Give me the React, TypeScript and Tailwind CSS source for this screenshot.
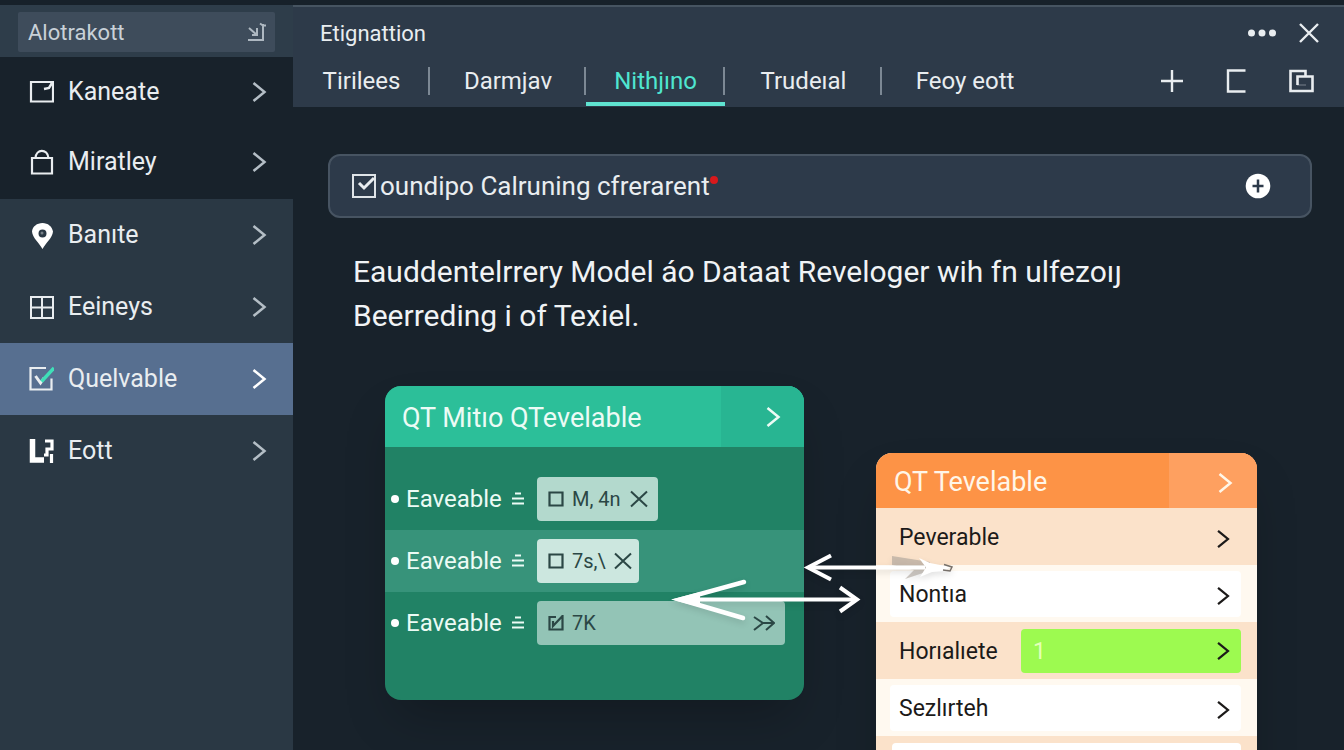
import type { ReactNode } from 'react'

const Chevron = ({ className = '' }: { className?: string }) => (
  <svg viewBox="0 0 16 22" className={`h-[22px] w-4 shrink-0 ${className}`} fill="none" stroke="currentColor" strokeWidth="2.500" aria-hidden="true">
    <path d="M2.500 2 L13.500 11 L2.500 20" />
  </svg>
)

const Icon = ({ children }: { children: ReactNode }) => (
  <svg viewBox="0 0 26 28" className="h-7 w-[26px] shrink-0" fill="none" stroke="currentColor" strokeWidth="2.200" aria-hidden="true">
    {children}
  </svg>
)

const topItems = [
  {
    label: 'Kaneate',
    icon: <Icon><path d="M3 4h22v19.500H3z" /><path d="M16 11l5-1 3-5" strokeWidth="2.500" /></Icon>,
  },
  {
    label: 'Miratley',
    icon: <Icon><path d="M4 10h20v15.500H4z" /><path d="M7.500 10C8 0.500 19.500 0.500 20.500 10" /></Icon>,
  },
]

const bottomItems = [
  {
    label: 'Banıte',
    icon: (
      <Icon>
        <path
          d="M14.500 2C9 2 4.500 5.500 4 10.500C4.500 17 11 21.500 14.500 28C18 21.500 24.500 17 25 10.500C24 5.500 20 2 14.500 2Z M14.500 8.500a4 4 0 1 1 0 8a4 4 0 1 1 0-8Z"
          fill="white"
          fillRule="evenodd"
          stroke="none"
        />
        <circle cx="14" cy="12" r="1.500" fill="currentColor" stroke="none" opacity="0.4" />
      </Icon>
    ),
  },
  {
    label: 'Eeineys',
    icon: <Icon><path d="M3 4h22v21H3zM14 4v21M3 14.500h22" strokeWidth="2" /></Icon>,
  },
  {
    label: 'Quelvable',
    active: true,
    icon: (
      <Icon>
        <path d="M18 3H2.500v21.500h21v-11" />
        <path d="M7.500 11l5 7 3.500-5" strokeWidth="3" />
        <path d="M13.500 16.500L26 3" stroke="#3fe0b8" strokeWidth="3.400" />
      </Icon>
    ),
  },
  {
    label: 'Eott',
    icon: (
      <Icon>
        <path d="M4.500 2v21h11.500" stroke="white" strokeWidth="5.500" />
        <path d="M17 4h7v8h-5v6h-3M23.500 17v9" stroke="white" strokeWidth="3.200" />
      </Icon>
    ),
  },
]

const tabs = [
  { label: 'Tirilees', width: 'w-[137px]' },
  { label: 'Darmjav', width: 'w-[156px]' },
  { label: 'Nithjıno', width: 'w-[139px]', active: true },
  { label: 'Trudeıal', width: 'w-[157px]' },
  { label: 'Feoy eott', width: 'w-[166px]' },
]

const NavItem = ({ label, icon, active, height }: { label: string; icon: ReactNode; active?: boolean; height: string }) => (
  <li>
    <a
      href="#"
      aria-current={active ? 'page' : undefined}
      className={`flex items-center gap-[14px] pr-[26px] pl-7 text-[25px] text-[#e9edf0] ${height} ${active ? 'bg-[#576f90]' : ''}`}
    >
      {icon}
      <span className="flex-1">{label}</span>
      <Chevron className={active ? 'text-white' : 'text-[#b4bec6]'} />
    </a>
  </li>
)

const Sidebar = () => (
  <aside className="flex w-[293px] shrink-0 flex-col bg-[#2a3844]">
    <div className="bg-[#2e3d4a] px-[18px] pt-[7px] pb-[5px]">
      <label className="flex h-10 items-center rounded-xs bg-[#3e4c5b] pr-2 pl-[10px]">
        <input
          aria-label="Alotrakott"
          defaultValue="Alotrakott"
          className="min-w-0 flex-1 bg-transparent text-[22px] text-[#c9d1d8] outline-none"
        />
        <svg viewBox="0 0 20 24" className="h-6 w-5 text-[#aeb8c1]" fill="none" stroke="currentColor" strokeWidth="2" aria-hidden="true">
          <path d="M1 20h15V4M13 3.500l3 2h3M2 8l8 7M10 8v7H5" />
        </svg>
      </label>
    </div>
    <nav>
      <ul className="bg-[#18222b] pb-[2px]">
        {topItems.map((item) => (
          <NavItem key={item.label} {...item} height="h-[70px]" />
        ))}
      </ul>
      <ul>
        {bottomItems.map((item) => (
          <NavItem key={item.label} {...item} height="h-[72px]" />
        ))}
      </ul>
    </nav>
  </aside>
)

const Header = () => (
  <header className="border-t-2 border-[#465461] bg-[#2d3a49] text-[#e9edf0]">
    <div className="flex h-[52px] items-center justify-between pr-6 pl-[27px]">
      <h1 className="text-[22px]">Etignattion</h1>
      <div className="flex items-center gap-5">
        <button aria-label="More">
          <svg viewBox="0 0 30 8" className="h-2 w-[30px]" fill="currentColor" aria-hidden="true">
            <circle cx="3.500" cy="4" r="3.500" />
            <circle cx="14" cy="4" r="3.500" />
            <circle cx="24.500" cy="4" r="3.500" />
          </svg>
        </button>
        <button aria-label="Close">
          <svg viewBox="0 0 22 22" className="size-[22px]" fill="none" stroke="currentColor" strokeWidth="2.400" aria-hidden="true">
            <path d="M2 2l18 18M20 2L2 20" />
          </svg>
        </button>
      </div>
    </div>
    <div className="flex h-12 justify-between pr-[30px]">
      <div role="tablist" className="flex">
        {tabs.map(({ label, width, active }, i) => (
          <button
            key={label}
            role="tab"
            aria-selected={!!active}
            className={`relative flex h-[47px] justify-center pt-1 text-2xl leading-9 whitespace-nowrap ${width} ${
              active ? 'border-b-4 border-[#5fe3d0] text-[#4fe6d0]' : ''
            }`}
          >
            {label}
            {i < tabs.length - 1 && <span className="absolute top-2 right-0 h-7 w-[2px] bg-[#7c8894]" />}
          </button>
        ))}
      </div>
      <div className="flex items-center gap-10 pb-1">
        <button aria-label="Add">
          <svg viewBox="0 0 24 24" className="size-6" fill="none" stroke="currentColor" strokeWidth="2.400" aria-hidden="true">
            <path d="M12 1v22M1 12h22" />
          </svg>
        </button>
        <button aria-label="Panel">
          <svg viewBox="0 0 24 24" className="size-6" fill="none" stroke="currentColor" strokeWidth="2.400" aria-hidden="true">
            <path d="M21.500 1.500H4v21h17.500" />
          </svg>
        </button>
        <button aria-label="Duplicate">
          <svg viewBox="0 0 26 24" className="h-6 w-[26px]" fill="none" stroke="currentColor" strokeWidth="2.600" aria-hidden="true">
            <path d="M17.500 7V2H2.500v20h22V7.500H9.500V16" />
            <path d="M9 16h9" strokeWidth="1" opacity="0.4" />
          </svg>
        </button>
      </div>
    </div>
  </header>
)

const SearchBar = () => (
  <div className="flex h-16 items-center justify-between rounded-xl border-2 border-[#475462] bg-[#2d3a4a] pr-[39px] pl-[22px]">
    <label className="flex items-center gap-1 text-[26px] leading-9 text-[#e9edf0]">
      <span className="relative size-6">
        <input type="checkbox" defaultChecked className="block size-6 appearance-none border-2 border-[#dfe4e8]" />
        <svg viewBox="0 0 24 24" className="pointer-events-none absolute inset-0" fill="none" stroke="currentColor" strokeWidth="3" aria-hidden="true">
          <path d="M7 9l5 5L22 4" />
        </svg>
      </span>
      <span>oundipo Calruning cfrerarent</span>
      <span className="mt-2 -ml-1 size-2 self-start rounded-full bg-[#d8191c]" />
    </label>
    <button aria-label="Add field" className="text-white">
      <svg viewBox="0 0 26 26" className="size-[26px]" aria-hidden="true">
        <circle cx="13" cy="13" r="12.300" fill="currentColor" />
        <path d="M13 6.500v13M7.500 13h11" stroke="#2d3a4a" strokeWidth="2.500" />
      </svg>
    </button>
  </div>
)

const Cross = () => (
  <svg viewBox="0 0 18 18" className="size-[18px]" fill="none" stroke="currentColor" strokeWidth="2" aria-hidden="true">
    <path d="M1 1.500l16 15M17 1.500L1 16.500" />
  </svg>
)

const Box = ({ checked = false }: { checked?: boolean }) => (
  <svg viewBox="0 0 16 16" className="size-4 shrink-0" fill="none" stroke="currentColor" strokeWidth="2.200" aria-hidden="true">
    {checked ? <path d="M8 2H1.500v12.500h13V1L5 11V6" /> : <path d="M1.500 1.500h13v13h-13z" />}
  </svg>
)

const variables = [
  { value: 'M, 4n', row: '', chip: 'w-[121px] bg-[#b3d9cd]' },
  { value: '7s,\\', row: 'bg-[#37937a]', chip: 'w-[102px] bg-[#cce7df]' },
  { value: '7K', row: '', chip: 'w-[248px] bg-[#93c4b6]', wide: true },
]

const GreenCard = () => (
  <section className="w-[419px] shrink-0 overflow-hidden rounded-2xl bg-[#218265] text-[#ecfbf5] shadow-2xl">
    <div className="flex h-[61px] items-center bg-[#2cbf99]">
      <h2 className="flex-1 pt-1 pl-[17px] text-[27px]">QT Mitıo QTevelable</h2>
      <button aria-label="Open QT Mitıo QTevelable" className="flex h-full w-[83px] items-center justify-center bg-[#28b592] pl-5">
        <Chevron />
      </button>
    </div>
    <ul className="pt-[21px] pb-[46px]">
      {variables.map(({ value, row, chip, wide }) => (
        <li key={value} className={`flex h-[62px] items-center pl-[6px] text-2xl ${row}`}>
          <span className="size-2 rounded-full bg-white" />
          <span className="w-28 pl-[7px]">Eaveable</span>
          <svg viewBox="0 0 14 14" className="mr-3 h-[14px] w-[14px]" fill="none" stroke="currentColor" strokeWidth="1.800" aria-hidden="true">
            <path d="M4 1.500h6M1 6.500h12M1 11.500h12" />
          </svg>
          <div className={`flex h-11 items-center gap-2 rounded-sm pr-[10px] pl-[11px] text-xl text-[#2b4745] ${chip}`}>
            <Box checked={wide} />
            <span className="flex-1 whitespace-nowrap">{value}</span>
            <button aria-label={wide ? 'Next' : 'Remove'}>
              {wide ? (
                <svg viewBox="0 0 22 18" className="h-[18px] w-[22px]" fill="none" stroke="currentColor" strokeWidth="2" aria-hidden="true">
                  <path d="M1 3l9 6H21M1 16l9-7M13 2l8 7-8 7" />
                </svg>
              ) : (
                <Cross />
              )}
            </button>
          </div>
        </li>
      ))}
    </ul>
  </section>
)

const Row = ({ label, striped = false }: { label: string; striped?: boolean }) => (
  <li className={`flex h-[57px] items-center pr-4 pl-[14px] ${striped ? 'bg-[#fbe2ca]' : 'bg-[#fff9f0]'}`}>
    <button className={`flex h-[46px] flex-1 items-center justify-between rounded-sm pt-1 pr-[10px] pl-[9px] text-[23px] text-[#1c1a19] ${striped ? '' : 'bg-white'}`}>
      {label}
      <Chevron className="scale-90" />
    </button>
  </li>
)

const OrangeCard = () => (
  <section className="mt-[67px] w-[381px] shrink-0 overflow-hidden rounded-t-2xl bg-[#fbe2ca] shadow-2xl">
    <div className="flex h-[55px] items-center bg-[#fd9346] text-[#fff6e8]">
      <h2 className="flex-1 pt-1 pl-[18px] text-[27px]">QT Tevelable</h2>
      <button aria-label="Open QT Tevelable" className="flex h-full w-[88px] items-center justify-center bg-[#fea060] pt-1 pl-6">
        <Chevron />
      </button>
    </div>
    <ul>
      <Row label="Peverable" striped />
      <Row label="Nontıa" />
      <li className="flex h-[57px] items-center bg-[#fbe2ca] pr-4 pl-[23px] text-[23px] text-[#1c1a19]">
        <span className="flex-1 pt-1">Horıalıete</span>
        <button className="flex h-11 w-[220px] items-center justify-between rounded-sm bg-[#9dfa50] pr-[10px] pl-3">
          <span className="pt-1 text-[#e4ffb8]">1</span>
          <Chevron className="scale-90" />
        </button>
      </li>
      <Row label="Sezlırteh" />
      <li className="h-[57px] pt-[7px] pr-4 pl-4">
        <div className="h-11 rounded-sm bg-white" />
      </li>
    </ul>
  </section>
)

// Arrows drawn over both cards
const Connectors = () => (
  <svg
    viewBox="660 540 300 90"
    className="pointer-events-none absolute top-[154px] left-[332px] h-[90px] w-[300px] drop-shadow-md"
    fill="none"
    stroke="white"
    strokeWidth="4"
    aria-hidden="true"
  >
    <path d="M892 556L930 562L926 572L905 579L914 570L892 565Z" fill="#a8a098" stroke="none" opacity="0.6" />
    <path d="M810 567.500H925" />
    <path d="M831 555.500L808 567.500L831 579.500" />
    <path d="M919 558L930 563L950 567L945 571L932 572L920 577L926 567.500Z" fill="white" stroke="none" />
    <path d="M944 564.500L952 567L950 571L943 570" stroke="#77706a" strokeWidth="1.500" />
    <path d="M680 599.500H856" />
    <path d="M744 582L680 599.500L743 618" strokeWidth="4.500" strokeLinecap="round" />
    <path d="M671 599.500L700 592V607Z" fill="white" stroke="none" />
    <path d="M840 587.500L857 599.500L840 611.500" />
  </svg>
)

export default function App() {
  return (
    <div className="flex h-screen flex-col overflow-hidden bg-[#18222b] font-['Roboto',sans-serif]">
      <div className="h-[5px] shrink-0 bg-[#17212a]" />
      <div className="flex min-h-0 flex-1">
        <Sidebar />
        <div className="min-w-0 flex-1">
          <Header />
          <main className="pt-[47px] pr-8 pl-[35px]">
            <SearchBar />
            <p className="mt-8 max-w-[820px] pl-[25px] text-[30px] leading-11 text-[#f0f3f5]">
              Eauddentelrrery Model áo Dataat Reveloger wih fn ulfezoıȷ Beerreding i of Texiel.
            </p>
            <div className="relative mt-12 flex items-start gap-[72px] pl-[57px]">
              <GreenCard />
              <OrangeCard />
              <Connectors />
            </div>
          </main>
        </div>
      </div>
    </div>
  )
}
